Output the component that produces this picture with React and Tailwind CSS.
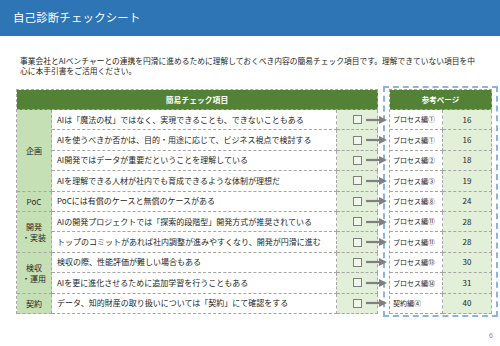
import React from 'react';

const rows = [
  { text: 'AIは「魔法の杖」ではなく、実現できることも、できないこともある', ref: 'プロセス編①', page: 16 },
  { text: 'AIを使うべきか否かは、目的・用途に応じて、ビジネス視点で検討する', ref: 'プロセス編①', page: 16 },
  { text: 'AI開発ではデータが重要だということを理解している', ref: 'プロセス編②', page: 18 },
  { text: 'AIを理解できる人材が社内でも育成できるような体制が理想だ', ref: 'プロセス編③', page: 19 },
  { text: 'PoCには有償のケースと無償のケースがある', ref: 'プロセス編⑧', page: 24 },
  { text: 'AIの開発プロジェクトでは「探索的段階型」開発方式が推奨されている', ref: 'プロセス編⑪', page: 28 },
  { text: 'トップのコミットがあれば社内調整が進みやすくなり、開発が円滑に進む', ref: 'プロセス編⑪', page: 28 },
  { text: '検収の際、性能評価が難しい場合もある', ref: 'プロセス編⑬', page: 30 },
  { text: 'AIを更に進化させるために追加学習を行うこともある', ref: 'プロセス編⑭', page: 31 },
  { text: 'データ、知的財産の取り扱いについては「契約」にて確認をする', ref: '契約編④', page: 40 },
];

const categories = [
  { label: ['企画'], span: 'row-span-4' },
  { label: ['PoC'], span: 'row-span-1' },
  { label: ['開発', '・実装'], span: 'row-span-2' },
  { label: ['検収', '・運用'], span: 'row-span-2' },
  { label: ['契約'], span: 'row-span-1' },
];

// which row each category starts on
const catStart = [0, 4, 5, 7, 9];

const cell = 'border-r border-b border-dashed border-[#a6a6a6]';

const Arrow = () => (
  <svg width="22" height="10" viewBox="0 0 22 10" className="absolute left-[29px] top-1/2 -translate-y-1/2 overflow-visible">
    <line x1="0" y1="5" x2="15" y2="5" stroke="#7f7f7f" strokeWidth="2.2" />
    <path d="M13 1 L21 5 L13 9 Z" fill="#7f7f7f" />
  </svg>
);

export default function App() {
  return (
    <div
      className="w-[500px] h-[346px] bg-white relative overflow-hidden text-[#262626]"
      style={{ fontFamily: '"Noto Sans CJK JP", "Noto Sans", sans-serif' }}
    >
      <div className="h-[36px] bg-[#2e75b6] flex items-center pl-[13px] text-white text-[11.4px] tracking-[0.2px]">
        自己診断チェックシート
      </div>

      <div className="pl-[20px] pt-[20px] text-[7.75px] leading-[10px] text-[#262626]">
        <div className="whitespace-nowrap">事業会社とAIベンチャーとの連携を円滑に進めるために理解しておくべき内容の簡易チェック項目です。理解できていない項目を中</div>
        <div className="whitespace-nowrap">心に本手引書をご活用ください。</div>
      </div>

      <div className="flex items-start pl-[16px] mt-[10px]">
        <div className="mt-[3px] grid grid-cols-[35px_285px_41px] grid-rows-[20px_repeat(10,20.4px)] border-l border-t border-dashed border-[#a6a6a6] text-[8px]">
          <div className="col-span-3 bg-[#538135] text-white font-bold flex items-center justify-center text-[7.8px] border-r border-b border-dashed border-[#a6a6a6]">
            簡易チェック項目
          </div>
          {rows.map((r, i) => {
            const ci = catStart.indexOf(i);
            return (
              <React.Fragment key={i}>
                {ci >= 0 && (
                  <div className={`${categories[ci].span} ${cell} bg-[#c5e0b4] flex flex-col items-center justify-center leading-[11px]`}>
                    {categories[ci].label.map((l) => (
                      <span key={l}>{l}</span>
                    ))}
                  </div>
                )}
                <div className={`${cell} bg-white flex items-center pl-[5px] whitespace-nowrap`}>{r.text}</div>
                <div className={`${cell} bg-[#e2efd9] relative flex items-center justify-center`}>
                  <div className="w-[9px] h-[9px] border border-[#7f7f7f] bg-[#f2f7ee]" />
                  <Arrow />
                </div>
              </React.Fragment>
            );
          })}
        </div>

        <div className="ml-[5px] border-2 border-dashed border-[#8fb4da] pl-[4px] pr-[4px] pt-[1px] pb-[1px]">
          <div className="grid grid-cols-[53px_49px] grid-rows-[20px_repeat(10,20.4px)] border-l border-t border-dashed border-[#a6a6a6] text-[8px]">
            <div className="col-span-2 bg-[#538135] text-white font-bold flex items-center justify-center text-[7.5px] border-r border-b border-dashed border-[#a6a6a6]">
              参考ページ
            </div>
            {rows.map((r, i) => (
              <React.Fragment key={i}>
                <div className={`${cell} bg-white flex items-center pl-[3px] text-[7px] whitespace-nowrap overflow-hidden`}>{r.ref}</div>
                <div className={`${cell} bg-[#e2efd9] flex items-center justify-center`}>{r.page}</div>
              </React.Fragment>
            ))}
          </div>
        </div>
      </div>

      <div className="absolute right-[7px] bottom-[5px] text-[7px] text-[#8c8c8c]" style={{ fontFamily: '"Liberation Sans", sans-serif' }}>
        6
      </div>
    </div>
  );
}
